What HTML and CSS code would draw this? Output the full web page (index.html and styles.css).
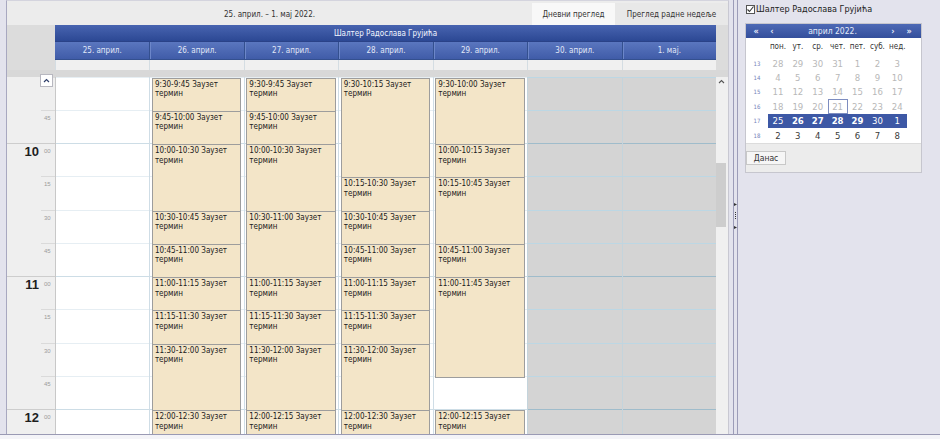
FILE: index.html
```html
<!DOCTYPE html>
<html>
<head>
    <meta charset="UTF-8">
    <meta name="viewport" content="width=device-width, initial-scale=1.0">
    <title>Распоред термина</title>
    <link rel="stylesheet" href="styles.css">
</head>
<body>
    <div class="app">
        <div class="scheduler">
            <div class="toolbar">
                <div class="range">25. април. – 1. мај 2022.</div>
                <div class="tab active">Дневни преглед</div>
                <div class="tab">Преглед радне недеље</div>
            </div>

            <div class="head">
                <div class="corner"></div>
                <div class="head-main">
                    <div class="resource">Шалтер Радослава Грујића</div>
                    <div class="day-names" id="day-names"></div>
                    <div class="allday" id="allday"></div>
                </div>
                <div class="head-gap"></div>
            </div>
            <div class="band"></div>

            <div class="body">
                <div class="times" id="times"></div>
                <div class="days" id="days"></div>
                <div class="scrollbar">
                    <svg class="sb-arrow" width="7" height="5" viewBox="0 0 7 5">
                        <polyline points="1,4 3.5,1.5 6,4" fill="none" stroke="#555" stroke-width="1.1"></polyline>
                    </svg>
                    <div class="thumb"></div>
                </div>
            </div>

            <!-- scroll-up button over the time column -->
            <button class="scroll-up">
                <svg width="7" height="5" viewBox="0 0 7 5">
                    <polyline points="1,4 3.5,1.5 6,4" fill="none" stroke="#2f3f6a" stroke-width="1.2"></polyline>
                </svg>
            </button>
        </div>

        <div class="splitter">
            <div class="split-lines">
                <svg class="grip" width="3" height="26" viewBox="0 0 3 26">
                    <polygon points="0,0 3,1.5 0,3" fill="#333"></polygon>
                    <rect x="1" y="9" width="1" height="1" fill="#333"></rect>
                    <rect x="1" y="11" width="1" height="1" fill="#333"></rect>
                    <rect x="1" y="13" width="1" height="1" fill="#333"></rect>
                    <rect x="1" y="15" width="1" height="1" fill="#333"></rect>
                    <polygon points="0,23 3,24.5 0,26" fill="#333"></polygon>
                </svg>
            </div>
        </div>

        <div class="side">
            <label class="res-check">
                <span class="box">
                    <svg width="9" height="9" viewBox="0 0 9 9">
                        <polyline points="1.5,4.5 3.5,6.5 7.5,1.5" fill="none" stroke="#333" stroke-width="1.1"></polyline>
                    </svg>
                </span>
                Шалтер Радослава Грујића
            </label>

            <div class="calendar">
                <div class="cal-head">
                    <span class="nav">«</span>
                    <span class="nav">‹</span>
                    <span class="cal-title">април 2022.</span>
                    <span class="nav">›</span>
                    <span class="nav">»</span>
                </div>
                <div class="cal-body" id="cal-body"></div>
                <div class="cal-foot">
                    <button class="today-btn">Данас</button>
                </div>
            </div>
        </div>
    </div>

    <script>
        // Configuration
        const dayLabels = ['25. април.', '26. април.', '27. април.', '28. април.', '29. април.', '30. април.', '1. мај.'];
        const offDays = [5, 6];
        const firstQuarter = 38;   // 9:30, counted in quarter hours
        const slotCount = 12;      // last one only peeks in at the bottom
        const slotHeight = 33.25;

        // Booked slots per day: [first slot, number of slots]
        const bookings = {
            1: [[0, 1], [1, 1], [2, 2], [4, 1], [5, 1], [6, 1], [7, 1], [8, 2], [10, 2]],
            2: [[0, 1], [1, 1], [2, 2], [4, 2], [6, 1], [7, 1], [8, 2], [10, 1]],
            3: [[0, 3], [3, 1], [4, 1], [5, 1], [6, 1], [7, 1], [8, 2], [10, 2]],
            4: [[0, 2], [2, 1], [3, 2], [5, 1], [6, 3], [10, 1]]
        };

        // Mini calendar weeks
        const calWeeks = [
            { num: 13, days: [28, 29, 30, 31, 1, 2, 3], kind: 'muted' },
            { num: 14, days: [4, 5, 6, 7, 8, 9, 10], kind: 'muted' },
            { num: 15, days: [11, 12, 13, 14, 15, 16, 17], kind: 'muted' },
            { num: 16, days: [18, 19, 20, 21, 22, 23, 24], kind: 'muted' },
            { num: 17, days: [25, 26, 27, 28, 29, 30, 1], kind: 'selected' },
            { num: 18, days: [2, 3, 4, 5, 6, 7, 8], kind: '' }
        ];
        const calNames = ['пон.', 'ут.', 'ср.', 'чет.', 'пет.', 'суб.', 'нед.'];

        function clock(q) {
            const h = Math.floor(q / 4);
            const m = (q % 4) * 15;
            return h + ':' + String(m).padStart(2, '0');
        }

        function el(tag, className, text) {
            const node = document.createElement(tag);
            if (className) node.className = className;
            if (text !== undefined) node.textContent = text;
            return node;
        }

        // Time column (no label on the first slot, the scroll button sits there,
        // and none on the last one, which is cut off)
        const times = document.getElementById('times');
        for (let s = 0; s < slotCount; s++) {
            const q = firstQuarter + s;
            const isHour = q % 4 === 0;
            const showLabel = s > 0 && s < slotCount - 1;
            const row = el('div', 'tslot' + (isHour ? ' hour' : ''));
            row.appendChild(el('span', 'h', isHour && showLabel ? String(q / 4) : ''));
            row.appendChild(el('span', 'm', showLabel ? String((q % 4) * 15).padStart(2, '0') : ''));
            times.appendChild(row);
        }

        // Day headers and columns
        const dayNames = document.getElementById('day-names');
        const allday = document.getElementById('allday');
        const days = document.getElementById('days');

        dayLabels.forEach((label, i) => {
            dayNames.appendChild(el('div', '', label));
            allday.appendChild(el('div'));

            const col = el('div', 'day' + (offDays.includes(i) ? ' off' : ''));
            for (let s = 0; s < slotCount; s++) {
                col.appendChild(el('div', 'slot' + ((firstQuarter + s) % 4 === 0 ? ' hour' : '')));
            }

            (bookings[i] || []).forEach(([start, len]) => {
                const text = clock(firstQuarter + start) + '-' + clock(firstQuarter + start + len) + ' Заузет термин';
                const ev = el('div', 'event', text);
                ev.style.top = (start * slotHeight + 1) + 'px';
                ev.style.height = (len * slotHeight + 1) + 'px';
                col.appendChild(ev);
            });

            days.appendChild(col);
        });

        // Mini calendar
        const calBody = document.getElementById('cal-body');
        const namesRow = el('div', 'cal-row names');
        namesRow.appendChild(el('span'));
        calNames.forEach(n => namesRow.appendChild(el('span', 'd', n)));
        calBody.appendChild(namesRow);

        calWeeks.forEach(week => {
            const row = el('div', 'cal-row ' + week.kind);
            row.appendChild(el('span', 'wk', String(week.num)));
            week.days.forEach((d, i) => {
                let cls = 'd';
                if (week.num === 16 && d === 21) cls += ' today';
                if (week.kind === 'selected' && i >= 1 && i <= 4) cls += ' bold';
                row.appendChild(el('span', cls, String(d)));
            });
            calBody.appendChild(row);
        });
    </script>
</body>
</html>
```

FILE: styles.css
```css
* {
    box-sizing: border-box;
}

body {
    margin: 0;
    background-color: #f4f4f8;
    font-family: "DejaVu Sans Condensed", "Liberation Sans", Arial, sans-serif;
    font-size: 8px;
    color: #1a1a1a;
    overflow: hidden;
}

.app {
    display: flex;
    height: 435px;
    padding-left: 6px;
    background-color: #e3e3ed;
    border-bottom: 1px solid #9a9ab4;
}

/* Scheduler */

.scheduler {
    position: relative;
    width: 723px;
    display: flex;
    flex-direction: column;
    background-color: #ececec;
    border-left: 1px solid #a8a8c0;
    border-top: 1px solid #d4d4de;
    border-right: 1px solid #c8c8d2;
}

.toolbar {
    display: flex;
    height: 24px;
    flex-shrink: 0;
}

.range {
    flex: 1;
    display: flex;
    align-items: center;
    justify-content: center;
    padding-top: 2px;
    color: #333;
}

.tab {
    margin-top: 2px;
    display: flex;
    align-items: center;
    justify-content: center;
    color: #333;
    background-color: #e8e8e8;
    width: 113px;
}

.tab.active {
    width: 83px;
    background-color: #f8f8f8;
}

.head {
    display: flex;
    flex-shrink: 0;
}

.corner,
.head-gap {
    background-color: #dcdcdc;
}

.corner {
    width: 48px;
}

.head-gap {
    width: 12px;
}

.head-main {
    width: 661px;
}

.resource {
    height: 17px;
    line-height: 17px;
    text-align: center;
    color: #f2f5ff;
    background: linear-gradient(#4864b0, #2c4894);
    border-bottom: 1px solid #2a4288;
}

.day-names {
    display: grid;
    grid-template-columns: repeat(7, 1fr);
    height: 18px;
    background: linear-gradient(#5a76bf, #405ca8);
    border-bottom: 1px solid #34508f;
}

.day-names div {
    line-height: 17px;
    text-align: center;
    color: #e2e8f8;
    border-left: 1px solid #34508f;
    box-shadow: inset 1px 0 #6c86c9;
}

.day-names div:first-child {
    border-left: none;
    box-shadow: none;
}

.allday {
    display: grid;
    grid-template-columns: repeat(7, 1fr);
    height: 10px;
    background-color: #f0f0f0;
}

.allday div {
    border-left: 1px solid #d4dde3;
}

.band {
    height: 6.5px;
    flex-shrink: 0;
    background-color: #d8d8d8;
}

.body {
    flex: 1;
    display: flex;
    overflow: hidden;
    background-color: white;
}

/* Time column */

.times {
    width: 48px;
    flex-shrink: 0;
    background-color: #efefef;
}

.tslot {
    display: flex;
    height: 33.25px;
}

.tslot .h {
    width: 34px;
    padding: 1px 2px 0 0;
    text-align: right;
    font-family: "Liberation Sans", Arial, sans-serif;
    font-size: 13px;
    font-weight: bold;
    line-height: 13px;
    color: #1e1e1e;
}

.tslot.hour .h {
    border-top: 1px solid #cdcdcd;
}

.tslot .m {
    flex: 1;
    padding: 4px 0 0 3px;
    border-top: 1px solid #dadada;
    font-family: "Liberation Sans", Arial, sans-serif;
    font-size: 6px;
    color: #9b9b9b;
}

.tslot.hour .m {
    border-top-color: #cdcdcd;
}

/* Day columns */

.days {
    width: 661px;
    display: grid;
    grid-template-columns: repeat(7, 1fr);
}

.day {
    position: relative;
    border-left: 1px solid #cfdde6;
}

.day:first-child {
    border-left-color: #c8c8c8;
}

.day.off {
    background-color: #d4d4d4;
    border-left-color: #c4d4dc;
}

.slot {
    height: 33.25px;
    border-top: 1px solid #e6eef3;
}

.slot.hour {
    border-top-color: #cddde6;
}

.day.off .slot {
    border-top-color: #bcd7e4;
}

.day.off .slot.hour {
    border-top-color: #9fbccb;
}

.event {
    position: absolute;
    left: 1.5px;
    right: 2.5px;
    padding: 1px 2px 0 2px;
    background-color: #f3e5c8;
    border: 1px solid #9d9d9d;
    line-height: 9.5px;
    color: #1a1a1a;
    overflow: hidden;
}

.scrollbar {
    width: 12px;
    flex-shrink: 0;
    background-color: #f0f0f0;
    display: flex;
    flex-direction: column;
}

.sb-arrow {
    margin: 2px 0 0 2px;
}

.thumb {
    margin-top: 79.5px;
    width: 10px;
    height: 64px;
    background-color: #cdcdcd;
}

.scroll-up {
    position: absolute;
    left: 33px;
    top: 73px;
    width: 13px;
    height: 13px;
    padding: 0;
    border: 1px solid #b8b8c0;
    background-color: white;
    display: flex;
    align-items: center;
    justify-content: center;
}

/* Splitter */

.splitter {
    width: 11px;
    flex-shrink: 0;
}

.split-lines {
    position: relative;
    height: 100%;
    width: 5px;
    margin-left: 4px;
    border-left: 1px solid #9c9cb8;
    border-right: 1px solid #9c9cb8;
}

.grip {
    position: absolute;
    left: 0;
    top: 203px;
}

/* Side panel */

.side {
    flex: 1;
    padding: 4px 0 0 5px;
}

.res-check {
    display: flex;
    align-items: center;
    height: 10px;
    margin-left: 1px;
    font-size: 9px;
    color: #222;
}

.box {
    width: 9px;
    height: 9px;
    margin-right: 1px;
    border: 1px solid #555;
    background-color: white;
    display: flex;
}

.box svg {
    margin: -1px;
}

.calendar {
    margin-top: 9px;
    width: 177px;
    border: 1px solid #c6c6ce;
    background-color: white;
}

.cal-head {
    display: grid;
    grid-template-columns: 16px 16px 1fr 16px 16px;
    align-items: center;
    height: 14px;
    padding: 0 4px 0 2px;
    background: linear-gradient(#4d69b5, #344f9c);
    color: #e4eaf8;
}

.nav {
    text-align: center;
    font-weight: bold;
    font-size: 9px;
    line-height: 12px;
}

.cal-title {
    text-align: center;
    font-size: 8.5px;
}

.cal-body {
    padding: 1px 0 1px 0;
}

.cal-row {
    display: grid;
    grid-template-columns: 22px repeat(7, 19.9px);
    height: 14.4px;
    align-items: center;
}

.cal-row.names {
    height: 14px;
    margin-bottom: 3px;
    color: #333;
}

.cal-row .d {
    height: 100%;
    display: flex;
    align-items: center;
    justify-content: center;
    font-size: 9.5px;
    color: #3a3a3a;
}

.cal-row.names .d {
    font-size: 8px;
    color: #333;
}

.cal-row .wk {
    text-align: center;
    font-size: 6px;
    color: #7282b8;
}

.cal-row.muted .d {
    color: #b8b8b8;
}

.cal-row .d.today {
    border: 1px solid #7d8dc0;
}

.cal-row.selected .d {
    background-color: #3d58a5;
    color: white;
}

.cal-row .d.bold {
    font-weight: bold;
}

.cal-foot {
    height: 29px;
    padding-top: 7px;
    background-color: #ececec;
    border-top: 1px solid #dcdcdc;
}

.today-btn {
    width: 40px;
    height: 14px;
    padding: 0;
    margin-left: 0;
    font-family: inherit;
    font-size: 8.5px;
    color: #333;
    background-color: #f6f6f6;
    border: 1px solid #c8c8c8;
}
```
